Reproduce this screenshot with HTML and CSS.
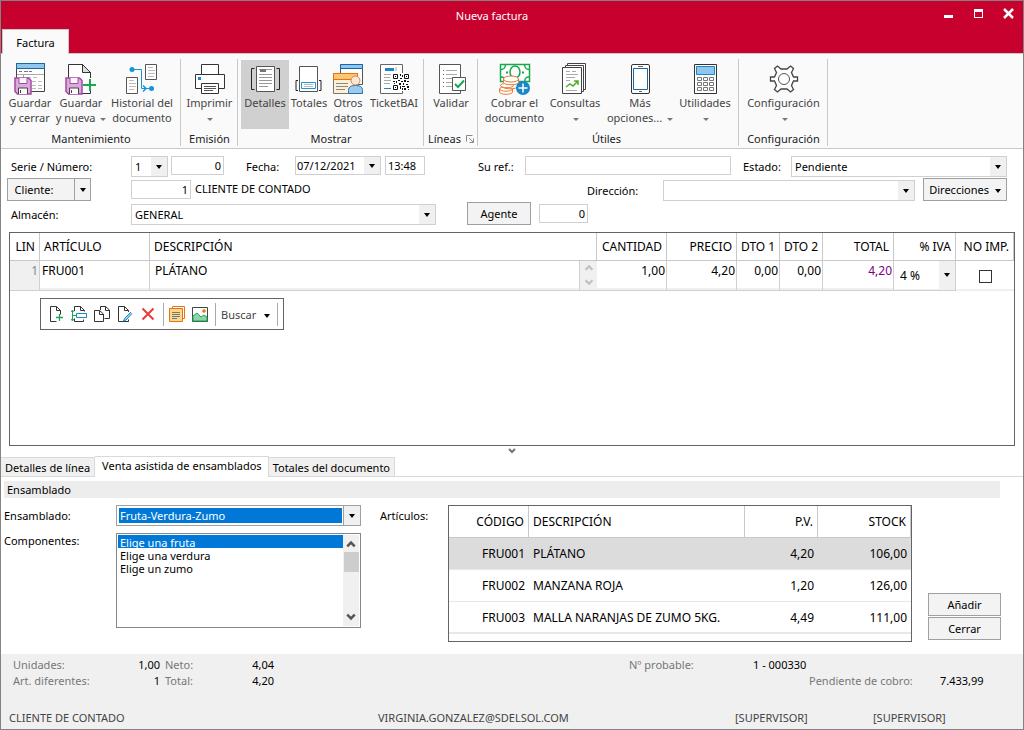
FILE: index.html
```html
<!DOCTYPE html>
<html lang="es">
<head>
<meta charset="utf-8">
<title>Nueva factura</title>
<link rel="stylesheet" href="styles.css">
</head>
<body>
<svg class="defs" aria-hidden="true">
  <symbol id="floppy" viewBox="0 0 18 18">
    <path d="M1 1h13.500l2.500 2.500v13.500h-13.500l-2.500-2.500z" fill="#dca9dc" stroke="#a349a4" stroke-width="1.500"/>
    <path d="M5 1v5.500h8v-5.500" fill="#fafafa" stroke="#a349a4"/>
    <path d="M4.500 17v-6h9v6" fill="#fafafa" stroke="#444"/>
    <path d="M6.500 13v3" stroke="#444"/>
  </symbol>
  <symbol id="chev-up" viewBox="0 0 8 7"><path d="M1 5l3-3 3 3" fill="none" stroke="currentColor" stroke-width="2"/></symbol>
  <symbol id="chev-down" viewBox="0 0 8 7"><path d="M1 2l3 3 3-3" fill="none" stroke="currentColor" stroke-width="2"/></symbol>
</svg>
<div class="window">
  <header class="titlebar">
    <div class="caption">
      <h1 class="title">Nueva factura</h1>
      <div class="controls">
        <button class="ctl" aria-label="Minimizar"><svg width="11" height="11"><path d="M1 7h9v3H1z" fill="#fff"/></svg></button>
        <button class="ctl" aria-label="Maximizar"><svg width="11" height="11"><path d="M1 1h9v9H1zM2 4v5h7V4z" fill="#fff" fill-rule="evenodd"/></svg></button>
        <button class="ctl" aria-label="Cerrar ventana"><svg width="11" height="11"><path d="M1 1l9 9M10 1l-9 9" stroke="#fff" stroke-width="2.500"/></svg></button>
      </div>
    </div>
    <button class="main-tab">Factura</button>
  </header>

  <nav class="ribbon" aria-label="Herramientas">
    <section class="group">
      <div class="tools">
        <button class="tool w52"><svg width="32" height="32"><path d="M2.500 .5h28v28h-28z" fill="#fff" stroke="#444"/><path d="M2.500 .5h28v5h-28z" fill="#8fc6ee" stroke="#1768a9"/><path d="M5 8.500h3M10 8.500h4M15 8.500h3" stroke="#777"/><path d="M3 11.500h27M9.500 12v16" stroke="#aaa"/><path d="M13 14.500h10M18 18.500h11M18 22.500h11M18 25.500h11" stroke="#bbb" stroke-dasharray="4 2"/><use href="#floppy" y="14" width="18" height="18"/></svg><span>Guardar<br>y cerrar</span></button>
        <button class="tool w50"><svg width="32" height="32"><path d="M3.500 1.500h14l8 8v21h-22z" fill="#fff" stroke="#333"/><path d="M17.500 1.500v8h8z" fill="#ddd" stroke="#333"/><use href="#floppy" y="14" width="18" height="18"/><path d="M18 22h13M24.500 15v13" stroke="#fafafa" stroke-width="5"/><path d="M18 22h13M25 16v12" stroke="#18a850" stroke-width="2"/></svg><span>Guardar<br>y nueva <i class="tri"></i></span></button>
        <button class="tool w72"><svg width="32" height="32"><path d="M19.500 1.500h11v15h-11zM.5 14.500h11v16h-11z" fill="#fff" stroke="#555"/><path d="M22 4.500h5M22 7.500h7M22 10.500h7M22 13.500h6M3 17.500h5M3 20.500h7M3 23.500h7M3 26.500h5" stroke="#bbb"/><path d="M6 6.500h9.500v19h8" fill="none" stroke="#1296db"/><path d="M17 22.500l3 3-3 3" fill="none" stroke="#1296db" stroke-width="1.500"/><circle cx="6" cy="6.500" r="2.500" fill="#1296db"/><circle cx="25.500" cy="25.500" r="2.500" fill="#1296db"/></svg><span>Historial del<br>documento</span></button>
      </div>
      <h2 class="group-name">Mantenimiento</h2>
    </section>
    <section class="group">
      <div class="tools">
        <button class="tool w51"><svg width="32" height="32"><path d="M7.500 11v-9.500h17v9.500" fill="#fff" stroke="#333"/><path d="M1.500 11.500h29v14h-29z" fill="#fff" stroke="#333"/><path d="M7.500 20.500h17v10h-17z" fill="#fff" stroke="#333"/><path d="M10 23.500h12M10 25.500h12M10 27.500h9" stroke="#555"/><path d="M4 14h3v3H4z" fill="#1b87c9"/></svg><span>Imprimir<br><i class="tri"></i></span></button>
      </div>
      <h2 class="group-name">Emisión</h2>
    </section>
    <section class="group">
      <div class="tools">
        <button class="tool w48 on"><svg width="32" height="32"><path d="M7.500 3.500h18v25h-18z" fill="#fff" stroke="#555"/><path d="M10 6.500h13M10 11.500h13M10 14.500h13M10 17.500h13M10 20.500h13M10 23.500h9" stroke="#999"/><path d="M11 6h6v3h-6z" fill="#777"/><path d="M5.500 5.500h-3v21h3M27.500 5.500h3v21h-3" fill="none" stroke="#222"/></svg><span>Detalles</span></button>
        <button class="tool w40"><svg width="32" height="32"><path d="M6.500 3.500h18v25h-18z" fill="#fff" stroke="#555"/><path d="M8.500 19.500h14v6h-14z" fill="#fff" stroke="#1a9ad7"/><path d="M11 21.500h9M11 23.500h9" stroke="#bbb"/><path d="M5 17.500h-2v10h2M26 17.500h2v10h-2" fill="none" stroke="#222"/></svg><span>Totales</span></button>
        <button class="tool w38"><svg width="32" height="32"><path d="M8.500 1.500h22v20h-22z" fill="#fff" stroke="#555"/><path d="M8.500 1.500h22v4h-22z" fill="#8fc6ee" stroke="#1768a9"/><path d="M1.500 10.500h24v20h-24z" fill="#fdf1d5" stroke="#777"/><path d="M1.500 10.500h24v6h-24z" fill="#fbc676" stroke="#e8730c"/><path d="M4 20.500h12M4 23.500h12M4 26.500h9" stroke="#888"/><path d="M16.500 30.500v-3c0-4 3-5 7-5s7 1 7 5v3z" fill="#9dcbee" stroke="#2870ad"/><circle cx="23.500" cy="17.500" r="4.500" fill="#fde6d2" stroke="#cf8653"/></svg><span>Otros<br>datos</span></button>
        <button class="tool w54"><svg width="32" height="32"><path d="M2.500 1.500h22v29h-22z" fill="#fff" stroke="#666"/><path d="M7 5h9v3H7z" fill="#1b87c9"/><path d="M6 11.500h7M6 14.500h6M6 17.500h7M6 20.500h6M18 4v4" stroke="#aaa"/><path d="M6 25.500h7" stroke="#1b87c9"/><path d="M14 10h18v18h-18z" fill="#fff"/><path d="M15.500 11.500h4v4h-4zM26.500 11.500h4v4h-4zM15.500 22.500h4v4h-4z" fill="#fff" stroke="#111"/><path d="M17 13h1v1h-1zM28 13h1v1h-1zM17 24h1v1h-1zM22 11h1v2h-1zM24 12h1v2h-1zM22 15h2v1h-2zM15 18h2v1h-2zM18 18h1v2h-1zM20 17h2v1h-2zM23 18h2v1h-2zM26 17h2v2h-2zM29 18h2v1h-2zM16 20h1v1h-1zM21 20h2v2h-2zM25 20h1v2h-1zM28 21h2v1h-2zM22 23h1v3h-1zM24 23h3v1h-3zM24 25h1v2h-1zM26 25h2v2h-2zM29 23h2v2h-2zM30 26h1v1h-1z" fill="#111"/></svg><span>TicketBAI</span></button>
      </div>
      <h2 class="group-name">Mostrar</h2>
    </section>
    <section class="group">
      <div class="tools">
        <button class="tool w48"><svg width="32" height="32"><path d="M4.500 1.500h21v29h-21z" fill="#fff" stroke="#555"/><path d="M11 7.500h11M11 11.500h11M11 15.500h8M11 19.500h6M11 23.500h6" stroke="#aaa"/><path d="M8 7h1v1H8zM8 15h1v1H8zM8 23h1v1H8z" fill="#18a850"/><path d="M8 11h1v1H8zM8 19h1v1H8z" fill="#d22"/><path d="M17.500 14.500h13v13h-13z" fill="#fff" stroke="#555"/><path d="M20 21l3 3 6-6.500" fill="none" stroke="#18a850" stroke-width="2"/></svg><span>Validar</span></button>
      </div>
      <h2 class="group-name">Líneas <svg width="8" height="8"><path d="M.5 6.500v-6h6M3 3l4 4M7.500 3.500v4h-4" fill="none" stroke="#888"/></svg></h2>
    </section>
    <section class="group wide">
      <div class="tools">
        <button class="tool w67"><svg width="32" height="32"><path d="M1.500 1.500h29v17h-29z" fill="#fff" stroke="#18a850" stroke-width="1.500"/><path d="M2 6.500c3 0 4-1 4.500-4.500M30 6.500c-3 0-4-1-4.500-4.500M2 14c3 0 4 1 4.500 4.500M30 14c-3 0-4 1-4.500 4.500" fill="none" stroke="#18a850" stroke-width="1.500"/><ellipse cx="16" cy="9" rx="5" ry="6" fill="#fff" stroke="#18a850" stroke-width="1.500"/><path d="M7 9.500h2M23 9.500h2" stroke="#18a850" stroke-width="2"/><g fill="#fff" stroke="#e77a36"><path d="M.5 26v3c0 3 13 3 13 0v-3"/><ellipse cx="7" cy="26" rx="6.500" ry="2.200"/><path d="M3.500 21v2.500c0 3 15 3 15 0v-2.500"/><ellipse cx="8" cy="22.500" rx="6.500" ry="2.200"/><path d="M4.500 16v3.500c0 3 15 3 15 0v-3.500"/><ellipse cx="12" cy="16" rx="7.500" ry="3"/></g><circle cx="24" cy="25" r="7" fill="#1b87c9"/><path d="M19.500 25h9M24 20.500v9" stroke="#fff" stroke-width="1.500"/></svg><span>Cobrar el<br>documento</span></button>
        <button class="tool w54"><svg width="32" height="32"><g fill="#fff" stroke="#444"><path d="M8.500 .5h18v26h-18z"/><path d="M6.500 2.500h18v26h-18z"/><path d="M3.500 4.500h19v26h-19z"/></g><path d="M7 8.500h4M13 8.500h4M7 11.500h12M7 14.500h9M7 17.500h4M7 27.500h11" stroke="#aaa"/><path d="M7 24l4-3 3 2 5-5M15 18h4v4" fill="none" stroke="#4caf27" stroke-width="1.500"/></svg><span>Consultas<br><i class="tri"></i></span></button>
        <button class="tool w76"><svg width="32" height="32"><rect x="7.500" y="1.500" width="18" height="29" rx="1.500" fill="#fff" stroke="#333"/><path d="M9.500 5.500h14v21h-14z" fill="#fff" stroke="#1768a9"/><path d="M14 3.500h5M15 28.500h3" stroke="#666"/></svg><span>Más<br>opciones... <i class="tri"></i></span></button>
        <button class="tool w54"><svg width="32" height="32"><path d="M5.500 1.500h22v29h-22z" fill="#fff" stroke="#333"/><path d="M7.500 3.500h18v8h-18z" fill="#8fc6ee" stroke="#1b87c9"/><path d="M8.500 14.500h4v3h-4zM14.500 14.500h4v3h-4zM20.500 14.500h4v3h-4zM8.500 19.500h4v3h-4zM14.500 19.500h4v3h-4zM20.500 19.500h4v3h-4zM8.500 24.500h4v3h-4zM14.500 24.500h4v3h-4zM20.500 24.500h4v3h-4z" fill="#fff" stroke="#777"/></svg><span>Utilidades<br><i class="tri"></i></span></button>
      </div>
      <h2 class="group-name">Útiles</h2>
    </section>
    <section class="group">
      <div class="tools">
        <button class="tool w83"><svg width="32" height="32"><path d="M2.500 14h4l2-4.500-2-4 3-2.500 3.500 3h6l3.500-3 3 2.500-2 4 2 4.500h4v4h-4l-2 4.500 2 4-3 2.500-3.500-3h-6l-3.500 3-3-2.500 2-4-2-4.500h-4z" fill="#fff" stroke="#444" stroke-width="1.300"/><circle cx="16" cy="16" r="5.500" fill="#fff" stroke="#555"/></svg><span>Configuración<br><i class="tri"></i></span></button>
      </div>
      <h2 class="group-name">Configuración</h2>
    </section>
  </nav>

  <main class="content">
    <form class="form">
      <div class="row row-a">
        <label class="lbl" for="serie">Serie / Número:</label>
        <span class="pick w37"><select id="serie"><option>1</option></select></span>
        <input class="box num w53" aria-label="Número" value="0">
        <label for="fecha">Fecha:</label>
        <span class="pick short w86"><select id="fecha"><option>07/12/2021</option></select></span>
        <input class="box w40" aria-label="Hora" value="13:48">
        <label for="ref">Su ref.:</label>
        <input class="box ref" id="ref">
        <label for="estado">Estado:</label>
        <span class="pick"><select id="estado"><option>Pendiente</option></select></span>
      </div>
      <div class="row row-b">
        <span class="split"><button type="button" class="btn client">Cliente:</button><button type="button" class="btn drop" aria-label="Opciones de cliente"><i class="tri dark"></i></button></span>
        <input class="box num w60" aria-label="Cliente" value="1">
        <span class="name">CLIENTE DE CONTADO</span>
        <label for="dir">Dirección:</label>
        <span class="pick dir"><select id="dir"><option></option></select></span>
        <button type="button" class="btn">Direcciones <i class="tri dark"></i></button>
      </div>
      <div class="row row-c">
        <label class="lbl" for="almacen">Almacén:</label>
        <span class="pick store"><select id="almacen"><option>GENERAL</option></select></span>
        <button type="button" class="btn agent">Agente</button>
        <input class="box num w49" aria-label="Agente" value="0">
      </div>
    </form>

    <div class="sheet">
      <table class="lines">
        <colgroup><col class="c30"><col class="c110"><col><col class="c17"><col class="c70"><col class="c70"><col class="c43"><col class="c43"><col class="c71"><col class="c62"><col class="c58"></colgroup>
        <thead><tr><th class="r">LIN</th><th>ARTÍCULO</th><th colspan="2">DESCRIPCIÓN</th><th class="r">CANTIDAD</th><th class="r">PRECIO</th><th class="r">DTO 1</th><th class="r">DTO 2</th><th class="r">TOTAL</th><th class="r">% IVA</th><th class="r last">NO IMP.</th></tr></thead>
        <tbody><tr>
          <td class="no">1</td>
          <td><input class="cell" aria-label="Artículo" value="FRU001"></td>
          <td><input class="cell desc" aria-label="Descripción" value="PLÁTANO"></td>
          <td class="spin"><svg width="10" height="8"><use href="#chev-up"/></svg><svg width="10" height="8"><use href="#chev-down"/></svg></td>
          <td><input class="cell num" aria-label="Cantidad" value="1,00"></td>
          <td><input class="cell num" aria-label="Precio" value="4,20"></td>
          <td><input class="cell num" aria-label="Dto 1" value="0,00"></td>
          <td><input class="cell num" aria-label="Dto 2" value="0,00"></td>
          <td><input class="cell num total" aria-label="Total" value="4,20"></td>
          <td class="vat"><span class="pick bare"><select aria-label="% IVA"><option>4 %</option></select></span></td>
          <td class="check"><input type="checkbox" aria-label="No imp."></td>
        </tr></tbody>
      </table>
      <div class="minibar">
        <button aria-label="Nueva línea"><svg width="16" height="16"><path d="M2.500 .5h6l4 4v4M2.500 .5v15h6M8.500 .5v4h4" fill="none" stroke="#333"/><path d="M8 11.500h7M11.500 8v7" stroke="#18a850" stroke-width="1.300"/></svg></button>
        <button aria-label="Insertar línea"><svg width="16" height="16"><path d="M3.500 5v-4.500h6l4 4v1M3.500 12.500v3h9v-2M9.500 .5v4h4" fill="none" stroke="#333"/><path d="M5.500 7.500h10v4h-10z" fill="#fff" stroke="#1b87c9"/><path d="M1.500 4.500v10M0 6l1.500-2 1.500 2M0 13l1.500 2 1.500-2M2 9.500h3" fill="none" stroke="#18a850"/></svg></button>
        <button aria-label="Duplicar línea"><svg width="16" height="16"><path d="M6.500 4v-3.500h5l4 3.500v8.500h-5M11.500 .5v4h4M.5 4.500h5l4 3.500v7.500h-9zM5.500 4.500v4h4" fill="none" stroke="#333"/></svg></button>
        <button aria-label="Modificar línea"><svg width="16" height="16"><path d="M1.500 .5h6l4 4v1.500M1.500 .5v15h10v-2M7.500 .5v4h4" fill="none" stroke="#333"/><path d="M14 6l-6.500 6.500-1 2.500 2.500-1L15 7.500" fill="#a7d3f0" stroke="#1b87c9"/></svg></button>
        <button aria-label="Borrar línea"><svg width="16" height="16"><path d="M2.500 2.500l11 11M13.500 2.500l-11 11" stroke="#e83b3b" stroke-width="2"/></svg></button>
        <i class="bar"></i>
        <button aria-label="Nota"><svg width="16" height="16"><path d="M3.500 2.500v-2h12v12h-2" fill="none" stroke="#e8730c"/><path d="M.5 2.500h13v13h-13z" fill="#fbd892" stroke="#e8730c"/><path d="M3 6.500h8M3 8.500h8M3 10.500h8M3 12.500h5" stroke="#777"/></svg></button>
        <button aria-label="Imagen"><svg width="16" height="16"><path d="M.5 1.500h15v14H.5z" fill="#fff" stroke="#444"/><path d="M1 10l4-3 4 4 3-2 3 2v4H1z" fill="#8fd3ab" stroke="#18a850"/><circle cx="12" cy="5" r="1.800" fill="#e8730c"/></svg></button>
        <i class="bar"></i>
        <button class="find">Buscar <i class="tri dark"></i></button>
        <i class="bar"></i>
      </div>
    </div>
    <button class="splitter" aria-label="Contraer panel"><svg width="8" height="7"><use href="#chev-down"/></svg></button>

    <div class="tabs" role="tablist">
      <button role="tab" class="tab">Detalles de línea</button><button role="tab" class="tab active" aria-selected="true">Venta asistida de ensamblados</button><button role="tab" class="tab">Totales del documento</button>
    </div>
    <section class="panel">
      <h2 class="panel-name">Ensamblado</h2>
      <div class="panel-body">
        <div class="fields">
          <label for="ens">Ensamblado:</label>
          <span class="pick strong"><select id="ens"><option>Fruta-Verdura-Zumo</option></select></span>
          <label for="comp">Componentes:</label>
          <div class="list">
            <select id="comp" size="7"><option selected>Elige una fruta</option><option>Elige una verdura</option><option>Elige un zumo</option></select>
            <div class="scroll"><svg width="10" height="9"><use href="#chev-up"/></svg><i class="thumb"></i><svg width="10" height="9"><use href="#chev-down"/></svg></div>
          </div>
        </div>
        <span class="art-label">Artículos:</span>
        <div class="art">
          <table>
            <colgroup><col class="c80"><col><col class="c73"><col class="c93"></colgroup>
            <thead><tr><th class="r">CÓDIGO</th><th>DESCRIPCIÓN</th><th class="r">P.V.</th><th class="r">STOCK</th></tr></thead>
            <tbody>
              <tr class="sel"><td class="r">FRU001</td><td>PLÁTANO</td><td class="r">4,20</td><td class="r">106,00</td></tr>
              <tr><td class="r">FRU002</td><td>MANZANA ROJA</td><td class="r">1,20</td><td class="r">126,00</td></tr>
              <tr><td class="r">FRU003</td><td>MALLA NARANJAS DE ZUMO 5KG.</td><td class="r">4,49</td><td class="r">111,00</td></tr>
            </tbody>
          </table>
        </div>
        <div class="actions"><button class="btn">Añadir</button><button class="btn">Cerrar</button></div>
      </div>
    </section>
  </main>

  <footer class="footer">
    <div class="sums">
      <span class="k">Unidades:</span><b class="num">1,00</b><span class="k">Neto:</span><b class="num">4,04</b><i></i><span class="k">Nº probable:</span><b>1 - 000330</b><i></i><i></i>
      <span class="k">Art. diferentes:</span><b class="num">1</b><span class="k">Total:</span><b class="num">4,20</b><i></i><i></i><i></i><span class="k">Pendiente de cobro:</span><b>7.433,99</b>
    </div>
    <div class="status"><span>CLIENTE DE CONTADO</span><span>VIRGINIA.GONZALEZ@SDELSOL.COM</span><span>[SUPERVISOR]</span><span>[SUPERVISOR]</span></div>
  </footer>
</div>
</body>
</html>
```
FILE: styles.css
```css
* { box-sizing: border-box; }
body { margin: 0; font: 11px/15px "Noto Sans", "Open Sans", sans-serif; color: #000; background: #fff; }
button, input, select { font: inherit; color: inherit; margin: 0; border-radius: 0; }
button { padding: 0; border: 0; background: none; }
h1, h2 { margin: 0; font: inherit; }
svg { display: block; flex: none; }
.defs { display: none; }
.window { display: flex; flex-direction: column; min-height: 100vh; border: 1px solid #838383; }

.titlebar { display: flex; flex-direction: column; justify-content: space-between; height: 53px; background: #c8002d; border-bottom: 1px solid #c8c8c8; }
.caption { display: flex; align-items: flex-start; padding-top: 7px; }
.title { flex: 1; padding-left: 40px; text-align: center; color: #fff; }
.controls { display: flex; gap: 18px; padding-right: 8px; }
.ctl { width: 12px; height: 11px; }
.main-tab { align-self: flex-start; height: 25px; width: 67px; margin: 0 0 -1px 1px; background: #fafafa; border: 1px solid #c8c8c8; border-bottom: 0; }

.ribbon { display: flex; height: 95px; padding: 5px 0 2px; background: #fafafa; border-bottom: 1px solid #c8c8c8; }
.group { display: flex; flex-direction: column; justify-content: space-between; padding: 0 2px 0 3px; border-right: 1px solid #c8c8c8; }
.group.wide { padding-right: 6px; }
.tools { display: flex; height: 69px; margin-top: 1px; justify-content: center; }
.tool { display: flex; flex-direction: column; align-items: center; padding-top: 3px; color: #444; white-space: nowrap; }
.tool.on { background: #d0d0d0; }
.group-name { display: flex; justify-content: center; align-items: center; gap: 5px; color: #222; }
.tri { display: inline-block; vertical-align: middle; border: 3px solid transparent; border-top-color: #777; border-bottom: 0; margin-left: 2px; }
.tri.dark { border-top: 4px solid #000; margin-left: 3px; }
.w37 { width: 37px; } .w38 { width: 38px; } .w40 { width: 40px; } .w48 { width: 48px; } .w49 { width: 49px; }
.w50 { width: 50px; } .w51 { width: 51px; } .w52 { width: 52px; } .w53 { width: 53px; } .w54 { width: 54px; }
.w60 { width: 60px; } .w67 { width: 67px; } .w72 { width: 72px; } .w76 { width: 76px; } .w83 { width: 83px; } .w86 { width: 86px; }

.content { display: flex; flex-direction: column; flex: 1; }
.form { padding: 7px 16px 4px 6px; }
.row { display: grid; align-items: start; height: 24px; line-height: 21px; }
.row-a { grid-template-columns: 124px 40px 75px 49px 90px 93px 47px 218fr 48px 216fr; }
.row-b { grid-template-columns: 124px 64px 392fr 76px 260fr 84px; }
.row-c { grid-template-columns: 124px 336fr 72px 49px 419fr; }
.lbl { padding-left: 4px; }
.name { line-height: 18px; }
.box { height: 19px; padding: 0 4px 1px 2px; border: 1px solid #d0d0d0; background: #fff; min-width: 0; }
.num { text-align: right; padding-right: 2px; }
.ref { margin-right: 12px; }
.pick { position: relative; display: block; height: 21px; border: 1px solid #d0d0d0; background: #fff; }
.pick.short { height: 19px; }
.pick select { display: block; width: 100%; height: 100%; padding: 0 17px 0 3px; border: 0; appearance: none; background: none; }
.pick.short select { padding-left: 1px; }
.pick::before { content: ""; position: absolute; top: 0; right: 0; bottom: 0; width: 16px; background: #f0f0f0; }
.pick::after { content: ""; position: absolute; right: 5px; top: 50%; margin-top: -2px; border: 3px solid transparent; border-top: 4px solid #000; border-bottom: 0; }
.pick, .pick select { line-height: 17px; }
.dir { margin-right: 8px; }
.store { margin-right: 31px; }
.btn { height: 23px; border: 1px solid #a0a0a0; background: #f3f3f3; line-height: 19px; white-space: nowrap; }
.row .btn { margin-top: -2px; }
.split { display: flex; }
.client { width: 68px; padding-right: 14px; }
.drop { display: flex; align-items: center; justify-content: center; width: 17px; margin-left: -1px; }
.drop .tri { margin: 0; }
.agent { margin-right: 8px; }

.sheet { flex: 1; margin: 0 8px; border: 1px solid #646464; font-size: 12px; }
table { width: 100%; table-layout: fixed; border-collapse: separate; border-spacing: 0; }
th { font-weight: normal; text-align: left; padding: 0 4px; border-right: 1px solid #c8c8c8; border-bottom: 1px solid #c8c8c8; white-space: nowrap; }
td { padding: 0 4px; white-space: nowrap; }
.r { text-align: right; }
.c17 { width: 17px; } .c30 { width: 30px; } .c43 { width: 43px; } .c58 { width: 58px; } .c62 { width: 62px; }
.c70 { width: 70px; } .c71 { width: 71px; } .c73 { width: 73px; } .c80 { width: 80px; } .c93 { width: 93px; } .c110 { width: 110px; }
.lines th { height: 28px; }
.lines td { height: 30px; padding: 0; vertical-align: top; border: 1px solid #d0d0d0; border-width: 0 1px 1px 0; box-shadow: inset 0 -2px #f0f0f0; }
.cell { width: 100%; height: 19px; padding: 1px 2px; border: 0; background: none; display: block; }
.cell.num { padding-right: 1px; }
.desc { padding-left: 5px; }
.total { color: #800080; }
.lines .no { padding: 2px 1px 0 0; text-align: right; color: #888; background: #f0f0f0; }
.lines .spin { background: #f0f0f0; color: #c0c0c0; padding: 3px 4px; border-width: 0 0 1px; }
.spin svg + svg { margin-top: 6px; }
.pick.bare { border: 0; height: 28px; }
.bare select { padding-left: 6px; }
.lines .check { border: 0; text-align: center; vertical-align: middle; }
.check input { appearance: none; display: block; width: 13px; height: 13px; margin: 0 auto; border: 1px solid #333; background: #fff; }
.minibar { display: inline-flex; align-items: center; height: 32px; margin: 7px 0 0 30px; padding: 0 7px; border: 1px solid #646464; gap: 7px; color: #444; font-size: 11px; }
.minibar .bar { width: 1px; height: 23px; margin-right: -2px; background: #aaa; }
.find { white-space: nowrap; }
.find .tri { margin-left: 5px; }
.splitter { align-self: center; height: 10px; padding-bottom: 2px; color: #777; }

.tabs { display: flex; align-items: flex-end; border-bottom: 1px solid #d9d9d9; }
.tab { height: 19px; padding: 0 4px; background: #f0f0f0; border: 1px solid #d9d9d9; border-bottom: 0; border-left: 0; white-space: nowrap; }
.tab.active { height: 21px; padding: 0 6px 3px 7px; margin-bottom: -1px; background: #fff; }
.panel { padding: 4px 23px 12px 3px; }
.panel-name { height: 17px; padding-left: 3px; line-height: 17px; background: #ededed; }
.panel-body { display: grid; grid-template-columns: 357fr 87px 464fr 16px 73px; margin-top: 7px; margin-right: -1px; }
.fields { display: grid; grid-template-columns: 112px 1fr; grid-template-rows: 28px 95px; line-height: 15px; }
.fields label:first-child { line-height: 21px; }
.strong { border-color: #a0a0a0; background: #fff; }
.strong select { width: calc(100% - 20px); height: 15px; margin: 2px; padding: 0 1px; color: #fff; background: #0078d7; line-height: 15px; }
.strong::before { border-left: 1px solid #a0a0a0; }
.list { display: flex; border: 1px solid #828790; padding: 1px; }
.list select { flex: 1; min-width: 0; border: 0; padding: 0; appearance: none; overflow: hidden; outline: 0; background: #fff; }
.list option { padding: 0 2px; height: 13px; min-height: 13px; line-height: 11px; }
.list option:checked { color: #fff; background: #0078d7 linear-gradient(#0078d7, #0078d7); }
.scroll { display: flex; flex-direction: column; align-items: center; width: 16px; padding: 5px 0; background: #f0f0f0; color: #555; }
.thumb { width: 15px; height: 20px; margin: 3px 0 auto; background: #cdcdcd; }
.art-label { padding-left: 19px; line-height: 21px; }
.art { height: 137px; border: 1px solid #646464; font-size: 12px; }
.art th, .art td { height: 32px; }
.art td { border-bottom: 1px solid #e8e8e8; }
.art tbody tr:last-child td { border-bottom-width: 2px; }
.sel { background: #dcdcdc; }
.actions { grid-column: 5; display: flex; flex-direction: column; justify-content: flex-end; gap: 1px; padding-bottom: 2px; }

.footer { background: #f0f0f0; padding: 3px 8px 4px; }
.sums { display: grid; grid-template-columns: 92px 57px 54px 60px 353fr 124px 56px 131px 75px; line-height: 16px; padding-left: 4px; white-space: nowrap; }
.sums b { font-weight: normal; }
.sums .k { color: #777; }
.sums .num + .k { padding-left: 3px; }
.status { display: grid; grid-template-columns: 369fr 357px 138px 142px; padding-top: 21px; color: #444; line-height: 15px; }
```
